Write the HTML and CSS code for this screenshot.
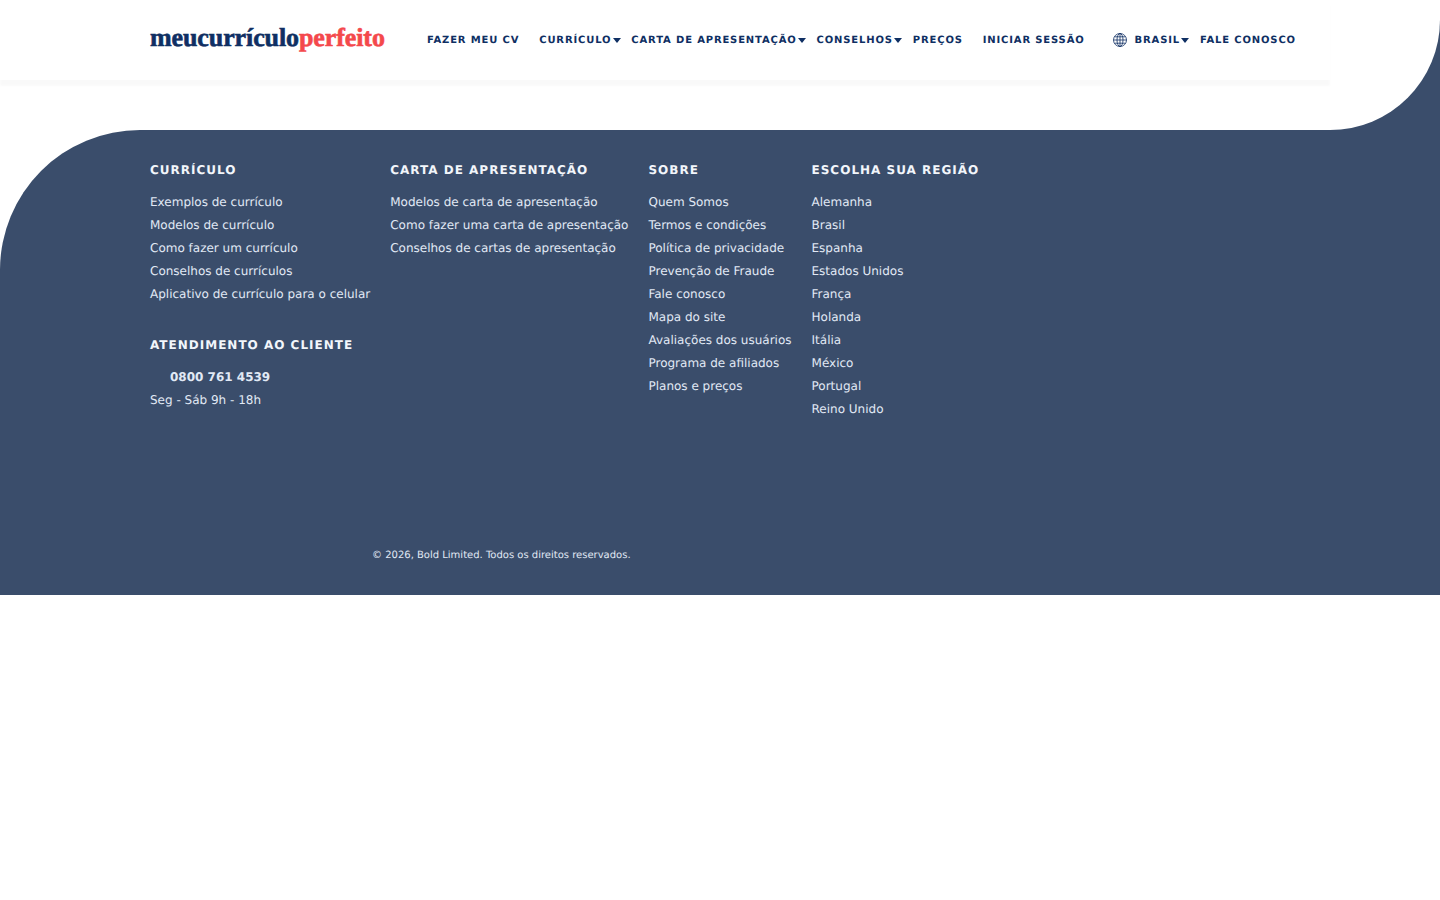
FILE: index.html
```html
<!DOCTYPE html>
<html lang="pt-BR">
<head>
  <meta charset="UTF-8" />
  <title>Meu Currículo Perfeito</title>
  <link rel="stylesheet" href="styles.css">
</head>
<body>
  <div class="header-wrap">
    <header class="header">
      <div class="top-bar">
        <a class="logo" href="#"><span class="logo-a">meucurrículo</span><span class="logo-b">perfeito</span></a>
        <nav class="nav">
          <a href="#">Fazer meu CV</a>
          <a href="#" class="has-caret">Currículo</a>
          <a href="#" class="has-caret">Carta de apresentação</a>
          <a href="#" class="has-caret">Conselhos</a>
          <a href="#">Preços</a>
          <a href="#">Iniciar sessão</a>
          <a href="#" class="has-caret lang">
            <svg class="globe" viewBox="0 0 14 14" width="14" height="14" fill="none" stroke="#0f2f63" stroke-width="0.8">
              <circle cx="7" cy="7" r="6.5"/>
              <ellipse cx="7" cy="7" rx="3" ry="6.5"/>
              <path d="M7 .5v13M.5 7h13M1.5 3.8h11M1.5 10.2h11"/>
            </svg>
            Brasil
          </a>
          <a href="#">Fale conosco</a>
        </nav>
      </div>
    </header>
  </div>

  <footer class="footer">
    <div class="columns">
      <div class="col">
        <h3>Currículo</h3>
        <ul>
          <li><a href="#">Exemplos de currículo</a></li>
          <li><a href="#">Modelos de currículo</a></li>
          <li><a href="#">Como fazer um currículo</a></li>
          <li><a href="#">Conselhos de currículos</a></li>
          <li><a href="#">Aplicativo de currículo para o celular</a></li>
        </ul>
        <h3 class="second">Atendimento ao cliente</h3>
        <p class="phone">0800 761 4539</p>
        <p class="hours">Seg - Sáb 9h - 18h</p>
      </div>
      <div class="col">
        <h3>Carta de apresentação</h3>
        <ul>
          <li><a href="#">Modelos de carta de apresentação</a></li>
          <li><a href="#">Como fazer uma carta de apresentação</a></li>
          <li><a href="#">Conselhos de cartas de apresentação</a></li>
        </ul>
      </div>
      <div class="col">
        <h3>Sobre</h3>
        <ul>
          <li><a href="#">Quem Somos</a></li>
          <li><a href="#">Termos e condições</a></li>
          <li><a href="#">Política de privacidade</a></li>
          <li><a href="#">Prevenção de Fraude</a></li>
          <li><a href="#">Fale conosco</a></li>
          <li><a href="#">Mapa do site</a></li>
          <li><a href="#">Avaliações dos usuários</a></li>
          <li><a href="#">Programa de afiliados</a></li>
          <li><a href="#">Planos e preços</a></li>
        </ul>
      </div>
      <div class="col">
        <h3>Escolha sua região</h3>
        <ul>
          <li><a href="#">Alemanha</a></li>
          <li><a href="#">Brasil</a></li>
          <li><a href="#">Espanha</a></li>
          <li><a href="#">Estados Unidos</a></li>
          <li><a href="#">França</a></li>
          <li><a href="#">Holanda</a></li>
          <li><a href="#">Itália</a></li>
          <li><a href="#">México</a></li>
          <li><a href="#">Portugal</a></li>
          <li><a href="#">Reino Unido</a></li>
        </ul>
      </div>
    </div>
    <p class="copyright">© 2026, Bold Limited. Todos os direitos reservados.</p>
  </footer>
</body>
</html>
```
FILE: styles.css
```css
:root {
  --navy: #0f2f63;
  --footer: #3a4d6b;
  --link: #e1e9f5;
}

* {
  box-sizing: border-box;
}

body {
  font-family: 'DejaVu Sans', sans-serif;
  background: #fff;
  margin: 0;
  text-rendering: geometricPrecision;
}

a {
  color: inherit;
  text-decoration: none;
}

/* dark corner behind the rounded header */
.header-wrap {
  background: linear-gradient(to bottom, #fff 20px, var(--footer) 20px);
  background-size: 110px 100%;
  background-position: right top;
  background-repeat: no-repeat;
  height: 130px;
}

.header {
  height: 130px;
  background: #fff;
  border-bottom-right-radius: 110px;
  overflow: hidden;
}

.top-bar {
  display: flex;
  align-items: center;
  width: 1330px;
  height: 80px;
  padding-left: 150px;
  box-shadow: 0 6px 2px rgba(0, 0, 0, 0.025);
}

.logo {
  font-family: 'Liberation Serif', serif;
  font-weight: bold;
  font-size: 26px;
  letter-spacing: -0.1px;
  width: 235px;
  margin-top: -4px;
  white-space: nowrap;
  -webkit-text-stroke: 0.6px currentColor;
}

.logo-a {
  color: var(--navy);
}

.logo-b {
  color: #f4484c;
}

.nav {
  display: flex;
  align-items: center;
  gap: 20px;
  margin-left: 42px;
  color: var(--navy);
  font-size: 10px;
  font-weight: bold;
  letter-spacing: 0.84px;
  text-transform: uppercase;
  white-space: nowrap;
}

.nav a {
  position: relative;
  display: flex;
  align-items: center;
}

.has-caret::after {
  content: "";
  position: absolute;
  left: 100%;
  top: 50%;
  margin: -2px 0 0 1.5px;
  border-top: 5px solid var(--navy);
  border-left: 4.5px solid transparent;
  border-right: 4.5px solid transparent;
}

.lang {
  margin-left: 8px;
}

.globe {
  margin-right: 8px;
}

.footer {
  height: 465px;
  background: var(--footer);
  border-top-left-radius: 140px;
  padding: 33px 0 0 150px;
  color: var(--link);
  font-size: 12px;
}

.columns {
  display: flex;
  gap: 20px;
  height: 387px;
}

h3 {
  margin: 0 0 14px;
  color: #f2f6fb;
  font-size: 12px;
  line-height: 14px;
  letter-spacing: 1px;
  text-transform: uppercase;
}

ul {
  list-style: none;
  margin: 0;
  padding: 0;
}

li, .hours {
  line-height: 23px;
}

h3.second {
  margin-top: 32px;
}

.phone {
  margin: 0;
  padding-left: 20px;
  font-weight: bold;
  line-height: 23px;
}

.hours {
  margin: 0;
}

.copyright {
  margin: 0 0 0 222px;
  font-size: 10px;
  line-height: 12px;
}
```
